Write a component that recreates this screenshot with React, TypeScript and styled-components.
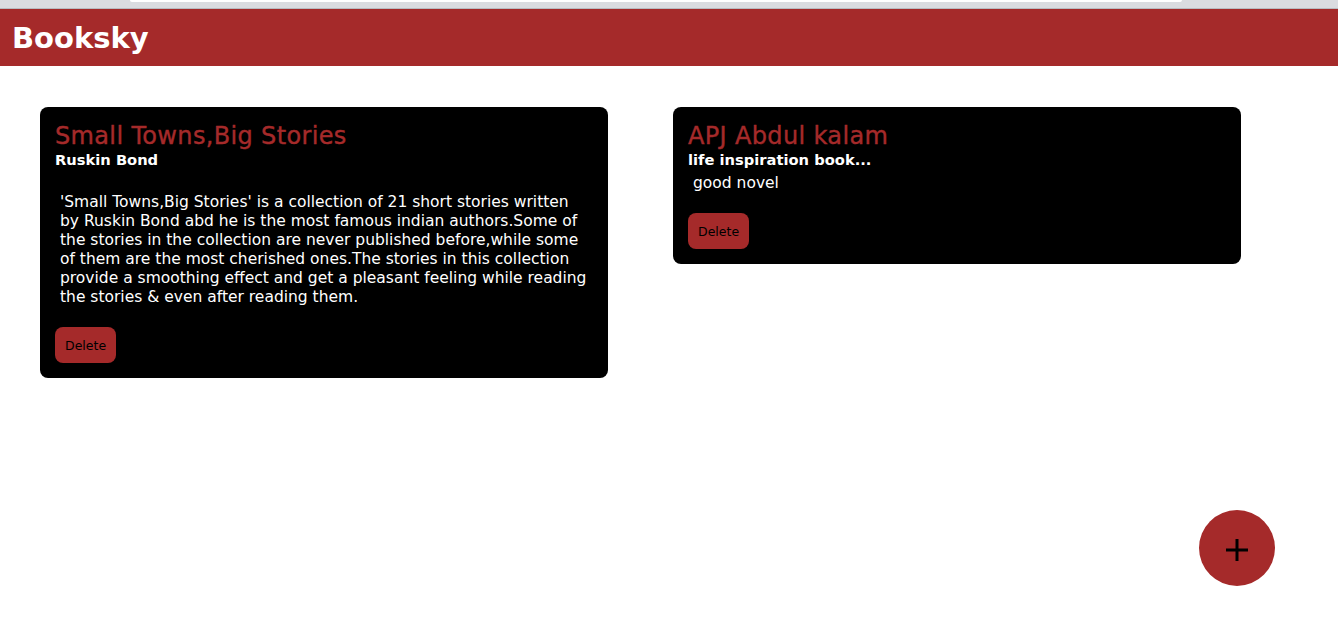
import React from "react";
import styled, { createGlobalStyle } from "styled-components";

const Global = createGlobalStyle`
  html, body { margin: 0; padding: 0; background: #fff; }
  body { font-family: "DejaVu Sans", Verdana, sans-serif; }
`;

const Chrome = styled.div`
  height: 8px;
  background: #dadce0;
  border-bottom: 1px solid #b8bbc0;
  display: flex;
  padding-left: 130px;
  padding-right: 156px;
`;

const ChromeBar = styled.div`
  flex: 1;
  height: 2px;
  background: #fff;
  border-radius: 0 0 8px 8px;
`;

const Header = styled.header`
  height: 57px;
  background: #a52a2a;
  display: flex;
  align-items: center;
  padding-left: 12px;
`;

const Brand = styled.h1`
  margin: 0;
  color: #fff;
  font-size: 29px;
  font-weight: bold;
`;

const Grid = styled.main`
  display: flex;
  align-items: flex-start;
  gap: 65px;
  padding: 41px 40px;
`;

const Card = styled.article`
  width: 568px;
  box-sizing: border-box;
  background: #000;
  border-radius: 8px;
  padding: 15px;
  display: flex;
  flex-direction: column;
`;

const Title = styled.h2`
  margin: 0;
  color: #a52a2a;
  font-size: 24px;
  font-weight: normal;
  line-height: 28px;
  letter-spacing: 0.35px;
  -webkit-text-stroke: 0.4px #a52a2a;
`;

const Author = styled.h4`
  margin: 0;
  color: #fff;
  font-size: 14.7px;
  font-weight: bold;
  line-height: 20px;
`;

const Desc = styled.p<{ $gap: boolean }>`
  margin: ${(p) => (p.$gap ? "23px" : "4px")} 0 20px;
  padding: 0 4px 0 5px;
  color: #fff;
  font-size: 15.5px;
  line-height: 19px;
`;

const DeleteButton = styled.button`
  align-self: flex-start;
  height: 36px;
  padding: 0 10px;
  border: none;
  border-radius: 8px;
  background: #a52a2a;
  color: #000;
  font-family: inherit;
  font-size: 12.5px;
`;

const Fab = styled.button`
  position: fixed;
  right: 63px;
  bottom: 34px;
  width: 76px;
  height: 76px;
  border-radius: 50%;
  border: none;
  background: #a52a2a;
  display: flex;
  align-items: center;
  justify-content: center;
  padding: 4px 0 0;
`;

const books = [
  {
    title: "Small Towns,Big Stories",
    author: "Ruskin Bond",
    gap: true,
    desc: "'Small Towns,Big Stories' is a collection of 21 short stories written by Ruskin Bond abd he is the most famous indian authors.Some of the stories in the collection are never published before,while some of them are the most cherished ones.The stories in this collection provide a smoothing effect and get a pleasant feeling while reading the stories & even after reading them.",
  },
  {
    title: "APJ Abdul kalam",
    author: "life inspiration book...",
    gap: false,
    desc: "good novel",
  },
];

export default function App() {
  return (
    <>
      <Global />
      <Chrome>
        <ChromeBar />
      </Chrome>
      <Header>
        <Brand>Booksky</Brand>
      </Header>
      <Grid>
        {books.map((b) => (
          <Card key={b.title}>
            <Title>{b.title}</Title>
            <Author>{b.author}</Author>
            <Desc $gap={b.gap}>{b.desc}</Desc>
            <DeleteButton>Delete</DeleteButton>
          </Card>
        ))}
      </Grid>
      <Fab aria-label="add">
        <svg width="24" height="24" viewBox="0 0 24 24">
          <path d="M12 1v22M1 12h22" stroke="#000" strokeWidth="3" />
        </svg>
      </Fab>
    </>
  );
}
